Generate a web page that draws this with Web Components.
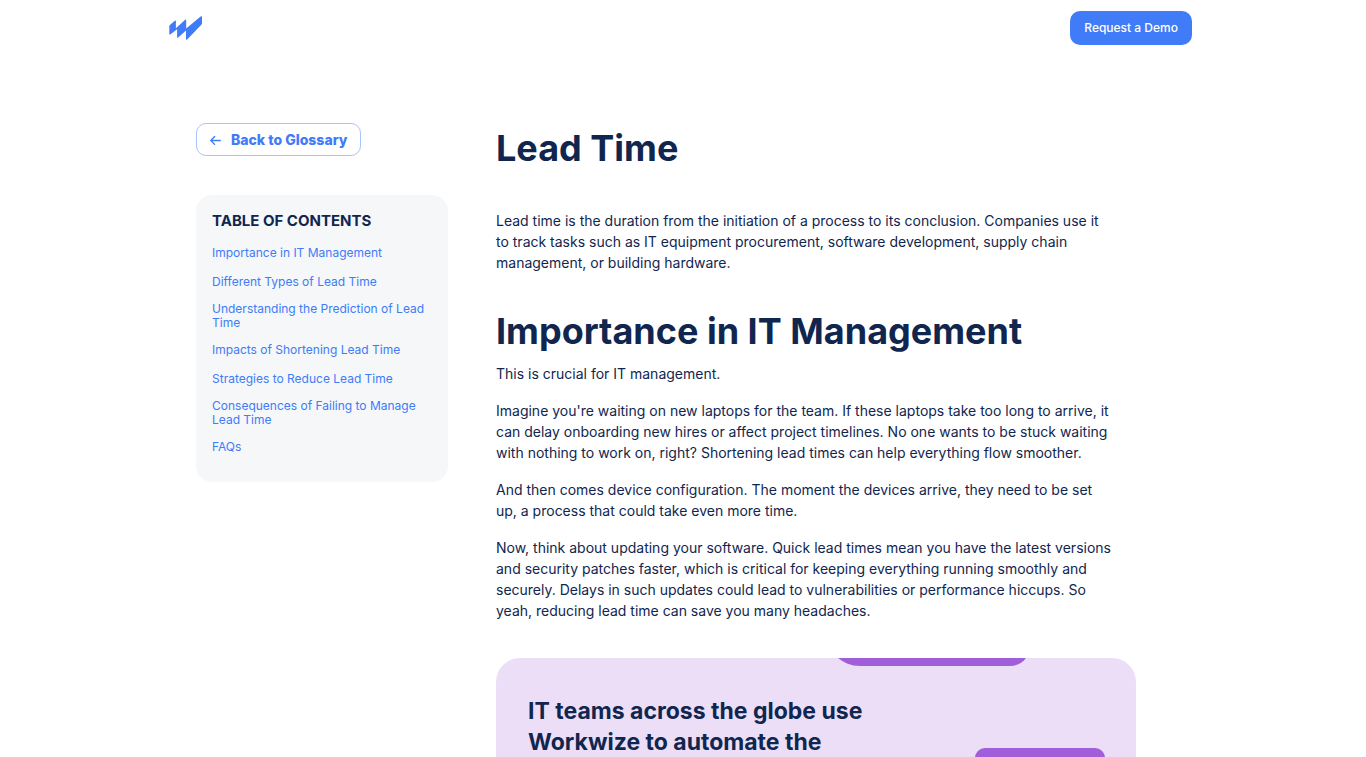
<!DOCTYPE html>
<html lang="en">
<head>
<meta charset="utf-8">
<meta name="viewport" content="width=device-width, initial-scale=1">
<title>Lead Time</title>
<style>
	:root {
		--blue: #407bf8;
		--navy: #11264f;
		--lilac: #ecdef7;
		--purple: #a05eda;
	}
	body {
		margin: 0;
		padding-right: 6px;
		box-sizing: border-box;
		height: 100vh;
		overflow: hidden;
		background: #fff;
		color: var(--navy);
		font-family: Inter, "Liberation Sans", sans-serif;
	}
</style>
</head>
<body>
<site-header></site-header>
<glossary-layout>
	<back-link slot="side" href="#glossary">Back to Glossary</back-link>
	<table-of-contents slot="side" heading="TABLE OF CONTENTS">
		<toc-item href="#importance">Importance in IT Management</toc-item>
		<toc-item href="#types">Different Types of Lead Time</toc-item>
		<toc-item href="#prediction">Understanding the Prediction of Lead Time</toc-item>
		<toc-item href="#impacts">Impacts of Shortening Lead Time</toc-item>
		<toc-item href="#strategies">Strategies to Reduce Lead Time</toc-item>
		<toc-item href="#consequences">Consequences of Failing to Manage Lead Time</toc-item>
		<toc-item href="#faqs">FAQs</toc-item>
	</table-of-contents>
	<glossary-article heading="Lead Time">
		<article-text slot="intro">Lead time is the duration from the initiation of a process to its conclusion. Companies use it<br>to track tasks such as IT equipment procurement, software development, supply chain<br>management, or building hardware.</article-text>
		<article-section id="importance" heading="Importance in IT Management">
			<article-text>This is crucial for IT management.</article-text>
			<article-text>Imagine you're waiting on new laptops for the team. If these laptops take too long to arrive, it<br>can delay onboarding new hires or affect project timelines. No one wants to be stuck waiting<br>with nothing to work on, right? Shortening lead times can help everything flow smoother.</article-text>
			<article-text>And then comes device configuration. The moment the devices arrive, they need to be set<br>up, a process that could take even more time.</article-text>
			<article-text>Now, think about updating your software. Quick lead times mean you have the latest versions<br>and security patches faster, which is critical for keeping everything running smoothly and<br>securely. Delays in such updates could lead to vulnerabilities or performance hiccups. So<br>yeah, reducing lead time can save you many headaches.</article-text>
		</article-section>
		<promo-card>IT teams across the globe use<br>Workwize to automate the</promo-card>
	</glossary-article>
</glossary-layout>

<script>
const HeaderTemplate = document.createElement("template");
HeaderTemplate.innerHTML = `
<style>
	:host {
		display: block;
	}
	header {
		display: flex;
		align-items: center;
		justify-content: space-between;
		max-width: 1024px;
		margin: 0 auto;
		padding: 11px 0;
	}
	.logo {
		display: block;
	}
	.logo svg {
		display: block;
	}
	button {
		border: 0;
		border-radius: 10px;
		padding: 0 14px;
		height: 34px;
		background: var(--blue);
		color: #fff;
		font: 500 12px/20px Inter, sans-serif;
		cursor: pointer;
	}
</style>
<header>
	<a class="logo" href="#" aria-label="Workwize">
		<svg width="34" height="24" viewBox="-1 0 34 24" fill="#407bf8">
			<path d="M0.9 9 5.8 4.8Q6.9 4 6.9 5.3V12.2L15.9 3.9Q17.2 2.8 17.2 4.4V12.6L31.6 0.6Q33 -0.3 33 1.3V7.2Q33 8 32.3 8.7L18.4 23.2Q17 24.4 17 22.8V14.6L9.5 21.3Q8.1 22.4 8.1 20.9V13.2L1.6 18.3Q0.3 19.1 0.3 17.7V10.4Q0.3 9.6 0.9 9Z"/>
		</svg>
	</a>
	<button type="button">Request a Demo</button>
</header>`;

class SiteHeader extends HTMLElement {
	constructor() {
		super();
		this.attachShadow({ mode: "open" });
		this.shadowRoot.appendChild(HeaderTemplate.content.cloneNode(true));
	}
}

// sidebar on the left, article on the right
const LayoutTemplate = document.createElement("template");
LayoutTemplate.innerHTML = `
<style>
	:host {
		display: block;
	}
	.layout {
		display: grid;
		grid-template-columns: 252px minmax(0, 1fr);
		gap: 48px;
		box-sizing: border-box;
		max-width: 1024px;
		margin: 0 auto;
		padding: 67px 56px 40px 28px;
	}
	aside {
		display: flex;
		flex-direction: column;
		align-items: stretch;
		gap: 39px;
	}
</style>
<div class="layout">
	<aside><slot name="side"></slot></aside>
	<main><slot></slot></main>
</div>`;

class GlossaryLayout extends HTMLElement {
	constructor() {
		super();
		this.attachShadow({ mode: "open" });
		this.shadowRoot.appendChild(LayoutTemplate.content.cloneNode(true));
	}
}

const BackTemplate = document.createElement("template");
BackTemplate.innerHTML = `
<style>
	:host {
		display: flex;
	}
	a {
		display: flex;
		align-items: center;
		gap: 10px;
		box-sizing: border-box;
		height: 33px;
		padding: 0 13px;
		border: 1px solid #a5c5fb;
		border-radius: 10px;
		color: var(--blue);
		font-size: 14px;
		font-weight: 800;
		line-height: 20px;
		text-decoration: none;
	}
</style>
<a>
	<svg width="11" height="10" viewBox="0 0 11 10" fill="none" stroke="currentColor" stroke-width="1.3" stroke-linecap="round" stroke-linejoin="round">
		<path d="M10.3 5.5H0.9M4.6 1.5 0.8 5.5 4.6 9.4"/>
	</svg>
	<slot></slot>
</a>`;

class BackLink extends HTMLElement {
	constructor() {
		super();
		this.attachShadow({ mode: "open" });
		this.shadowRoot.appendChild(BackTemplate.content.cloneNode(true));
	}
	connectedCallback() {
		this.shadowRoot.querySelector("a").setAttribute("href", this.getAttribute("href"));
	}
}

const TocTemplate = document.createElement("template");
TocTemplate.innerHTML = `
<style>
	:host {
		display: block;
	}
	nav {
		padding: 16px 16px 18px;
		border-radius: 16px;
		background: #f5f7f9;
	}
	h2 {
		margin: 0 0 10px;
		font-size: 15px;
		font-weight: 700;
		line-height: 20px;
	}
</style>
<nav>
	<h2></h2>
	<slot></slot>
</nav>`;

class TableOfContents extends HTMLElement {
	constructor() {
		super();
		this.attachShadow({ mode: "open" });
		this.shadowRoot.appendChild(TocTemplate.content.cloneNode(true));
	}
	connectedCallback() {
		this.shadowRoot.querySelector("h2").textContent = this.getAttribute("heading");
	}
}

const TocItemTemplate = document.createElement("template");
TocItemTemplate.innerHTML = `
<style>
	:host {
		display: flex;
		align-items: center;
		box-sizing: border-box;
		min-height: 29px;
		padding: 3px 0 8px;
	}
	a {
		color: var(--blue);
		font-size: 12px;
		line-height: 14px;
		text-decoration: none;
	}
</style>
<a><slot></slot></a>`;

class TocItem extends HTMLElement {
	constructor() {
		super();
		this.attachShadow({ mode: "open" });
		this.shadowRoot.appendChild(TocItemTemplate.content.cloneNode(true));
	}
	connectedCallback() {
		this.shadowRoot.querySelector("a").setAttribute("href", this.getAttribute("href"));
	}
}

const ArticleTemplate = document.createElement("template");
ArticleTemplate.innerHTML = `
<style>
	:host {
		display: block;
	}
	h1 {
		margin: 0 0 37px;
		font-size: 36px;
		font-weight: 700;
		line-height: 50px;
	}
</style>
<article>
	<h1></h1>
	<slot name="intro"></slot>
	<slot></slot>
</article>`;

class GlossaryArticle extends HTMLElement {
	constructor() {
		super();
		this.attachShadow({ mode: "open" });
		this.shadowRoot.appendChild(ArticleTemplate.content.cloneNode(true));
	}
	connectedCallback() {
		this.shadowRoot.querySelector("h1").textContent = this.getAttribute("heading");
	}
}

const SectionTemplate = document.createElement("template");
SectionTemplate.innerHTML = `
<style>
	:host {
		display: block;
		margin-top: 33px;
	}
	h2 {
		margin: 0 0 7px;
		font-size: 36px;
		font-weight: 700;
		line-height: 50px;
	}
</style>
<section>
	<h2></h2>
	<slot></slot>
</section>`;

class ArticleSection extends HTMLElement {
	constructor() {
		super();
		this.attachShadow({ mode: "open" });
		this.shadowRoot.appendChild(SectionTemplate.content.cloneNode(true));
	}
	connectedCallback() {
		this.shadowRoot.querySelector("h2").textContent = this.getAttribute("heading");
	}
}

const TextTemplate = document.createElement("template");
TextTemplate.innerHTML = `
<style>
	:host {
		display: block;
		margin-bottom: 16px;
	}
	p {
		margin: 0;
		font-size: 14px;
		line-height: 21px;
	}
</style>
<p><slot></slot></p>`;

class ArticleText extends HTMLElement {
	constructor() {
		super();
		this.attachShadow({ mode: "open" });
		this.shadowRoot.appendChild(TextTemplate.content.cloneNode(true));
	}
}

const PromoTemplate = document.createElement("template");
PromoTemplate.innerHTML = `
<style>
	:host {
		display: block;
		margin-top: 37px;
	}
	.card {
		position: relative;
		overflow: hidden;
		padding: 38px 32px 40px;
		border-radius: 24px;
		background: var(--lilac);
	}
	h3 {
		margin: 0;
		font-size: 23px;
		font-weight: 700;
		line-height: 31px;
	}
	/* blocks of the artwork that sit behind the heading */
	.shape {
		position: absolute;
		background: var(--purple);
	}
	.top {
		top: -48px;
		right: 106px;
		width: 204px;
		height: 56px;
		border-radius: 0 0 20px 34px;
	}
	.side {
		top: 90px;
		right: 31px;
		width: 130px;
		height: 80px;
		border-radius: 10px;
	}
</style>
<div class="card">
	<div class="shape top"></div>
	<div class="shape side"></div>
	<h3><slot></slot></h3>
</div>`;

class PromoCard extends HTMLElement {
	constructor() {
		super();
		this.attachShadow({ mode: "open" });
		this.shadowRoot.appendChild(PromoTemplate.content.cloneNode(true));
	}
}

customElements.define("site-header", SiteHeader);
customElements.define("glossary-layout", GlossaryLayout);
customElements.define("back-link", BackLink);
customElements.define("table-of-contents", TableOfContents);
customElements.define("toc-item", TocItem);
customElements.define("glossary-article", GlossaryArticle);
customElements.define("article-section", ArticleSection);
customElements.define("article-text", ArticleText);
customElements.define("promo-card", PromoCard);
</script>
</body>
</html>
